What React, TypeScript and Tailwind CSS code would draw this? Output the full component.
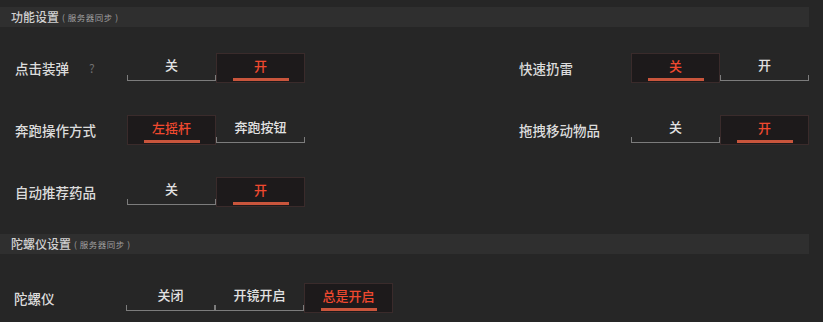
import React from "react";

type Opt = { label: string; on?: boolean };

const font = { fontFamily: '"Noto Sans CJK SC", "Noto Sans", sans-serif' };

function Segment({ label, on }: Opt) {
  if (on) {
    return (
      <div className="w-[89px] h-[30px] flex flex-col items-center bg-[#1d1a1b] border border-[#3a2b2b]">
        <div className="flex-1 flex items-center text-[13px] font-medium text-[#f0492f]">{label}</div>
        <div className="w-[56px] h-[3px] mb-[1px] bg-[#c9553c]" />
      </div>
    );
  }
  return (
    <div className="w-[89px] h-[30px] flex flex-col items-stretch">
      <div className="flex-1 flex items-center justify-center text-[13px] font-medium text-[#e2e2e2] pt-[1px]">
        {label}
      </div>
      <div className="h-[6px] mb-[2px] border-x border-b border-[#7c7c7c]" />
    </div>
  );
}

function Row({ label, help, opts }: { label: string; help?: boolean; opts: Opt[] }) {
  return (
    <div className="flex items-center">
      <div className="w-[112px] flex items-center text-[13.5px] font-medium text-[#dcdcdc]">
        {label}
        {help && <span className="ml-[20px] text-[12px] font-normal text-[#6f6f6f]">?</span>}
      </div>
      <div className="flex">
        {opts.map((o) => (
          <Segment key={o.label} {...o} />
        ))}
      </div>
    </div>
  );
}

function Header({ title }: { title: string }) {
  return (
    <div className="h-[20px] mr-[14px] bg-[#2f2f2f] flex items-center pl-[11px]">
      <span className="text-[12px] font-medium text-[#d0d0d0]">{title}</span>
      <span className="ml-[3px] text-[8.5px] text-[#a0a0a0] tracking-[0.5px]">( 服务器同步 )</span>
    </div>
  );
}

export default function App() {
  return (
    <div className="w-[823px] h-[322px] bg-[#262626] pt-[7px] overflow-hidden" style={font}>
      <Header title="功能设置" />
      <div className="grid grid-cols-[504px_1fr] gap-y-[32px] pl-[15px] pt-[26px]">
        <Row label="点击装弹" help opts={[{ label: "关" }, { label: "开", on: true }]} />
        <Row label="快速扔雷" opts={[{ label: "关", on: true }, { label: "开" }]} />
        <Row label="奔跑操作方式" opts={[{ label: "左摇杆", on: true }, { label: "奔跑按钮" }]} />
        <Row label="拖拽移动物品" opts={[{ label: "关" }, { label: "开", on: true }]} />
        <Row label="自动推荐药品" opts={[{ label: "关" }, { label: "开", on: true }]} />
      </div>
      <div className="mt-[27px]">
        <Header title="陀螺仪设置" />
      </div>
      <div className="pl-[15px] pt-[29px]">
        <div className="-ml-px">
          <Row
            label="陀螺仪"
            opts={[{ label: "关闭" }, { label: "开镜开启" }, { label: "总是开启", on: true }]}
          />
        </div>
      </div>
    </div>
  );
}
